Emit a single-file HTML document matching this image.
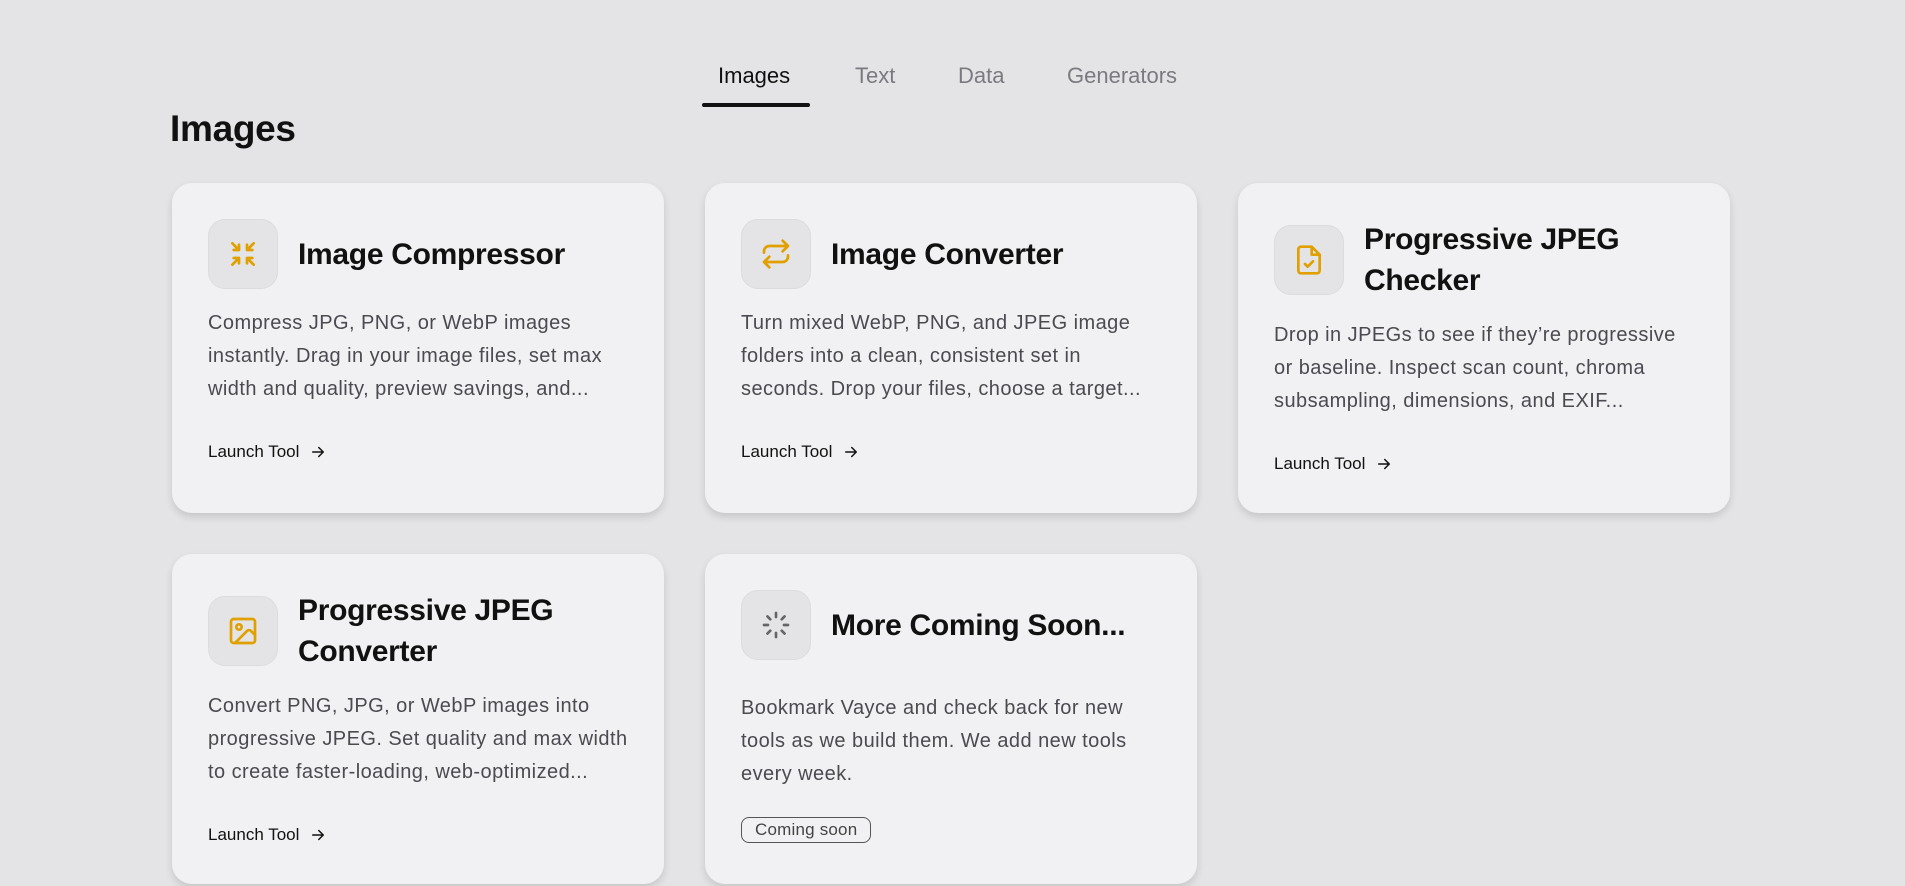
<!DOCTYPE html>
<html><head><style>
*{box-sizing:border-box;margin:0;padding:0}
body{width:1905px;height:886px;background:#e4e4e7;font-family:"Liberation Sans",sans-serif;position:relative;overflow:hidden;color:#111}
.tab{position:absolute;top:63px;font-size:22px;color:#7a7a80}
.tab.a{color:#111}
.ul{position:absolute;left:702px;top:103px;width:108px;height:4px;background:#111;border-radius:2px}
h1{position:absolute;left:170px;top:108px;font-size:37px;font-weight:700;letter-spacing:-0.3px}
.card{position:absolute;width:492px;height:330px;background:#f1f1f3;border-radius:20px;box-shadow:0 4px 8px rgba(0,0,0,.13);padding:36px 28px 36px 36px}
.hd{display:flex;align-items:center;gap:20px;min-height:70px}
.ic{width:70px;height:70px;flex:none;border-radius:17px;background:#e4e4e7;border:1px solid #dcdcdf;display:flex;align-items:center;justify-content:center}
.t{font-size:30px;font-weight:700;line-height:41px;letter-spacing:-0.3px}
.d{margin-top:18px;font-size:20px;line-height:33px;color:#4a4a50;letter-spacing:0.45px}
.l{margin-top:36px;font-size:17px;color:#111;display:flex;align-items:center;gap:10px}
.badge{display:inline-block;margin-top:26px;border:1px solid #555;border-radius:8px;padding:2px 13px;font-size:17px;color:#444;letter-spacing:0.2px}
</style></head><body>
<div class="tab a" style="left:718px">Images</div>
<div class="tab" style="left:855px">Text</div>
<div class="tab" style="left:958px">Data</div>
<div class="tab" style="left:1067px">Generators</div>
<div class="ul"></div>
<h1>Images</h1>

<div class="card" style="left:172px;top:183px">
<div class="hd"><div class="ic"><svg width="32" height="32" viewBox="0 0 24 24" fill="none" stroke="#e0a000" stroke-width="2" stroke-linecap="round" stroke-linejoin="round"><path d="M4 4l5 5M9 5v4H5M20 4l-5 5M15 5v4h4M4 20l5-5M5 15h4v4M20 20l-5-5M19 15h-4v4"/></svg></div><div class="t">Image Compressor</div></div>
<div class="d">Compress JPG, PNG, or WebP images instantly. Drag in your image files, set max width and quality, preview savings, and...</div>
<div class="l">Launch Tool <svg width="18" height="18" viewBox="0 0 24 24" fill="none" stroke="#111" stroke-width="2" stroke-linecap="round" stroke-linejoin="round"><path d="M5 12h14M13 6l6 6-6 6"/></svg></div></div>

<div class="card" style="left:705px;top:183px">
<div class="hd"><div class="ic"><svg width="32" height="32" viewBox="0 0 24 24" fill="none" stroke="#e0a000" stroke-width="2" stroke-linecap="round" stroke-linejoin="round"><path d="M17 2l4 4-4 4M3 11V10a4 4 0 0 1 4-4h14M7 22l-4-4 4-4M21 13v1a4 4 0 0 1-4 4H3"/></svg></div><div class="t">Image Converter</div></div>
<div class="d">Turn mixed WebP, PNG, and JPEG image folders into a clean, consistent set in seconds. Drop your files, choose a target...</div>
<div class="l">Launch Tool <svg width="18" height="18" viewBox="0 0 24 24" fill="none" stroke="#111" stroke-width="2" stroke-linecap="round" stroke-linejoin="round"><path d="M5 12h14M13 6l6 6-6 6"/></svg></div></div>

<div class="card" style="left:1238px;top:183px">
<div class="hd"><div class="ic"><svg width="32" height="32" viewBox="0 0 24 24" fill="none" stroke="#e0a000" stroke-width="2" stroke-linecap="round" stroke-linejoin="round"><path d="M14 2H6a2 2 0 0 0-2 2v16a2 2 0 0 0 2 2h12a2 2 0 0 0 2-2V8z"/><path d="M14 2v6h6M9 15l2 2 4-4"/></svg></div><div class="t">Progressive JPEG Checker</div></div>
<div class="d" style="padding-right:24px">Drop in JPEGs to see if they’re progressive or baseline. Inspect scan count, chroma subsampling, dimensions, and EXIF...</div>
<div class="l">Launch Tool <svg width="18" height="18" viewBox="0 0 24 24" fill="none" stroke="#111" stroke-width="2" stroke-linecap="round" stroke-linejoin="round"><path d="M5 12h14M13 6l6 6-6 6"/></svg></div></div>

<div class="card" style="left:172px;top:554px">
<div class="hd"><div class="ic"><svg width="32" height="32" viewBox="0 0 24 24" fill="none" stroke="#e0a000" stroke-width="2" stroke-linecap="round" stroke-linejoin="round"><rect x="3" y="3" width="18" height="18" rx="2"/><circle cx="9" cy="9" r="2"/><path d="M21 15l-3-3a2 2 0 0 0-3 0L6 21"/></svg></div><div class="t">Progressive JPEG Converter</div></div>
<div class="d">Convert PNG, JPG, or WebP images into progressive JPEG. Set quality and max width to create faster-loading, web-optimized...</div>
<div class="l">Launch Tool <svg width="18" height="18" viewBox="0 0 24 24" fill="none" stroke="#111" stroke-width="2" stroke-linecap="round" stroke-linejoin="round"><path d="M5 12h14M13 6l6 6-6 6"/></svg></div></div>

<div class="card" style="left:705px;top:554px">
<div class="hd"><div class="ic"><svg width="32" height="32" viewBox="0 0 24 24" fill="none" stroke="#666" stroke-width="2" stroke-linecap="round"><path d="M12 3v3M12 18v3M5.6 5.6l2.1 2.1M16.3 16.3l2.1 2.1M3 12h3M18 12h3M5.6 18.4l2.1-2.1M16.3 7.7l2.1-2.1"/></svg></div><div class="t">More Coming Soon...</div></div>
<div class="d" style="margin-top:32px">Bookmark Vayce and check back for new tools as we build them. We add new tools every week.</div>
<div class="badge">Coming soon</div></div>
</body></html>
